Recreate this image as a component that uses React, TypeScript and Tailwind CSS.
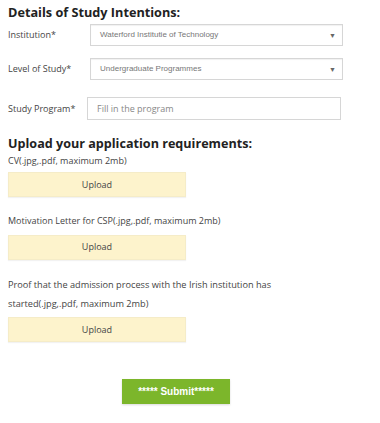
function SelectBox({ value }: { value: string }) {
  return (
    <div className="flex items-center justify-between w-[253px] h-[22px] border border-[#d6d6d6] bg-white pl-[9px] pr-[6px] shadow-[inset_0_1px_1px_rgba(0,0,0,0.06)]">
      <span className="text-[8px] text-[#777] font-['Liberation_Sans',sans-serif]">{value}</span>
      <span className="text-[7px] text-[#666] leading-none">▼</span>
    </div>
  );
}

function UploadButton() {
  return (
    <button
      type="button"
      className="w-[178px] h-[25px] bg-[#fdf3cc] border border-[#f5ecc8] text-[9px] text-[#444] shadow-[0_1px_1px_rgba(0,0,0,0.05)]"
    >
      Upload
    </button>
  );
}

function App() {
  return (
    <div className="w-[380px] h-[423px] bg-white pl-[8px] font-['Open_Sans',sans-serif] text-[#444] overflow-hidden">
      <h2 className="pt-[3px] text-[12.7px] leading-[18px] font-bold text-[#222]">
        Details of Study Intentions:
      </h2>

      <div className="flex items-center mt-[3px]">
        <label className="w-[82px] text-[9px]">Institution*</label>
        <SelectBox value="Waterford Institutie of Technology" />
      </div>

      <div className="flex items-center mt-[12px]">
        <label className="w-[82px] text-[9px]">Level of Study*</label>
        <SelectBox value="Undergraduate Programmes" />
      </div>

      <div className="flex items-center mt-[17px]">
        <label className="w-[79px] text-[9px]">Study Program*</label>
        <input
          type="text"
          placeholder="Fill in the program"
          className="w-[254px] h-[23px] border border-[#d6d6d6] bg-white px-[9px] text-[9px] placeholder:text-[#888] outline-none"
        />
      </div>

      <h2 className="mt-[15px] text-[12.6px] leading-[18px] font-bold text-[#222]">
        Upload your application requirements:
      </h2>

      <p className="text-[9px] leading-[16px]">CV(.jpg,.pdf, maximum 2mb)</p>
      <div className="mt-[1px]">
        <UploadButton />
      </div>

      <p className="mt-[16px] text-[9px] leading-[16px]">
        Motivation Letter for CSP(.jpg,.pdf, maximum 2mb)
      </p>
      <div className="mt-[3px]">
        <UploadButton />
      </div>

      <p className="mt-[15px] w-[290px] text-[9.2px] leading-[19px]">
        Proof that the admission process with the Irish institution has started(.jpg,.pdf, maximum 2mb)
      </p>
      <div className="mt-[2px]">
        <UploadButton />
      </div>

      <div className="mt-[35px] pl-[114px]">
        <button
          type="submit"
          className="w-[108px] h-[25px] bg-[#7cb62b] text-white text-[10px] font-bold font-['Liberation_Sans',sans-serif] shadow-[0_1px_2px_rgba(0,0,0,0.15)]"
        >
          ***** Submit*****
        </button>
      </div>
    </div>
  );
}

export default App;
